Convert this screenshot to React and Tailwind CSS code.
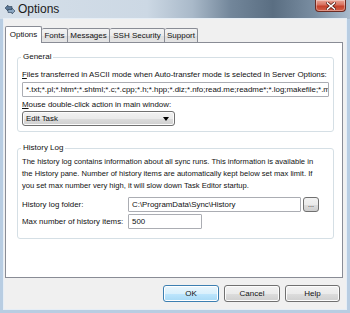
import React from "react";

function Btn({ children, w, def }) {
  return (
    <div
      className={
        "h-[17px] rounded-[3px] border flex items-center justify-center text-[8px] leading-none " +
        (def
          ? "border-[#3c7fb1] bg-[linear-gradient(180deg,#eaf6fd_0%,#d9f0fc_50%,#bee6fd_51%,#a7d9f5_100%)] shadow-[inset_0_0_0_1px_#ffffff]"
          : "border-[#707070] bg-[linear-gradient(180deg,#f2f2f2_0%,#ebebeb_50%,#dddddd_51%,#cfcfcf_100%)] shadow-[inset_0_0_0_1px_#fcfcfc]")
      }
      style={{ width: w }}
    >
      {children}
    </div>
  );
}

function Tab({ label, w, active }) {
  if (active) {
    return (
      <div
        className="h-[17px] -mb-[1px] relative z-10 bg-white border border-b-0 border-[#898c95] rounded-t-[2px] flex items-start justify-center pt-[4px] text-[8px] leading-none"
        style={{ width: w }}
      >
        {label}
      </div>
    );
  }
  return (
    <div
      className="h-[14px] border border-l-0 border-b-0 border-[#898c95] rounded-t-[2px] bg-[linear-gradient(180deg,#f3f3f3_0%,#ebebeb_50%,#dedede_51%,#e4e4e4_100%)] flex items-start justify-center pt-[3px] text-[8px] leading-none"
      style={{ width: w }}
    >
      {label}
    </div>
  );
}

function Group({ title, className, children }) {
  return (
    <div className={"relative border border-[#d5dfe5] rounded-[3px] " + className}>
      <span className="absolute -top-[6px] left-[3px] bg-white px-[2px] text-[8px] leading-[10px]">
        {title}
      </span>
      {children}
    </div>
  );
}

function Field({ children, className }) {
  return (
    <div
      className={
        "h-[15px] bg-white border border-[#abadb3] rounded-[1px] flex items-center pl-[3px] text-[7.9px] leading-none overflow-hidden whitespace-nowrap " +
        className
      }
    >
      {children}
    </div>
  );
}

export default function App() {
  return (
    <div className="w-[350px] h-[313px] flex flex-col bg-[#b8cde2] font-['Liberation_Sans',Arial,sans-serif] text-[#111] overflow-hidden">
      {/* title bar */}
      <div className="h-[19px] flex items-start bg-[linear-gradient(90deg,#d5dfe9_0%,#ccd8e4_42%,#a9b9c9_55%,#72869a_66%,#5a6e82_78%,#7a8ea2_90%,#a9bbcd_100%)]">
        <svg className="ml-[4px] mt-[4px]" width="12" height="11" viewBox="0 0 12 11">
          <path d="M1 4 L4 1 L4 2.5 L8 2.5 L8 5.5 L4 5.5 L4 7 Z" fill="#5b7897" stroke="#2c4056" strokeWidth="0.6" />
          <path d="M11 7 L8 10 L8 8.5 L4 8.5 L4 5.5 L8 5.5 L8 4 Z" fill="#8aa6c2" stroke="#2c4056" strokeWidth="0.6" />
        </svg>
        <span className="ml-[2px] mt-[3px] text-[12px] leading-[13px] text-[#1b1b1b]">Options</span>
        <div className="flex-1" />
        <div className="mr-[4px] w-[31px] h-[12px] rounded-b-[4px] border border-t-0 border-[#6b2a22] bg-[linear-gradient(180deg,#e9a597_0%,#d8705e_45%,#c4402b_55%,#d2614a_100%)] flex items-center justify-center shadow-[inset_0_0_0_1px_rgba(255,255,255,0.35)]">
          <svg width="10" height="8" viewBox="0 0 10 8">
            <path d="M1.5 1 L8.5 7 M8.5 1 L1.5 7" stroke="#5a1e17" strokeWidth="3" strokeLinecap="square" />
            <path d="M1.5 1 L8.5 7 M8.5 1 L1.5 7" stroke="#ffffff" strokeWidth="1.6" strokeLinecap="square" />
          </svg>
        </div>
      </div>

      {/* client */}
      <div className="flex-1 mx-[4px] mb-[4px] bg-[#f0f0f0] flex flex-col pt-[7px] pl-[1px] pr-[3px] shadow-[0_0_0_1px_#e6eef6]">
        {/* tabs */}
        <div className="h-[16px] flex items-end">
          <Tab label="Options" w={37} active />
          <Tab label="Fonts" w={26} />
          <Tab label="Messages" w={42} />
          <Tab label="SSH Security" w={55} />
          <Tab label="Support" w={33} />
        </div>
        {/* panel */}
        <div className="h-[236px] bg-white border border-[#898c95] flex flex-col">
          <Group title="General" className="mt-[14px] ml-[11px] mr-[8px] pt-[12px] pb-[5px] pl-[4px] pr-[4px]">
            <div className="h-[10px] leading-[10px] text-[7.9px] whitespace-nowrap">
              <span className="underline">F</span>iles transferred in ASCII mode when Auto-transfer mode is selected in Server Options:
            </div>
            <Field className="mt-[2px] h-[14px]">
              *.txt;*.pl;*.htm*;*.shtml;*.c;*.cpp;*.h;*.hpp;*.diz;*.nfo;read.me;readme*;*.log;makefile;*.m
            </Field>
            <div className="mt-[3px] h-[10px] leading-[10px] text-[7.9px]">
              <span className="underline">M</span>ouse double-click action in main window:
            </div>
            <div className="mt-[1px] w-[153px] h-[15px] rounded-[3px] border border-[#707070] bg-[linear-gradient(180deg,#f2f2f2_0%,#ebebeb_50%,#dddddd_51%,#cfcfcf_100%)] shadow-[inset_0_0_0_1px_#fcfcfc] flex items-center pl-[3px] pr-[5px] text-[7.9px] leading-none">
              <span className="flex-1">Edit Task</span>
              <svg width="6" height="4" viewBox="0 0 6 4">
                <path d="M0 0 L6 0 L3 4 Z" fill="#000" />
              </svg>
            </div>
          </Group>

          <Group title="History Log" className="mt-[16px] ml-[11px] mr-[8px] pt-[7px] pb-[9px] pl-[4px] pr-[4px]">
            <div className="text-[7.6px] leading-[12px] whitespace-nowrap">
              The history log contains information about all sync runs. This information is available in
              <br />
              the History pane. Number of history items are automatically kept below set max limit. If
              <br />
              you set max number very high, it will slow down Task Editor startup.
            </div>
            <div className="mt-[5px] flex items-center h-[15px]">
              <div className="w-[106px] text-[7.9px] leading-none">History log folder:</div>
              <Field className="w-[173px]">C:\ProgramData\Sync\History</Field>
              <div className="ml-[2px] w-[16px] h-[15px] rounded-[3px] border border-[#707070] bg-[linear-gradient(180deg,#f2f2f2_0%,#ebebeb_50%,#dddddd_51%,#cfcfcf_100%)] flex items-center justify-center text-[7px] leading-none">
                ...
              </div>
            </div>
            <div className="mt-[2px] flex items-center h-[15px]">
              <div className="w-[106px] text-[7.9px] leading-none">Max number of history items:</div>
              <Field className="w-[74px]">500</Field>
            </div>
          </Group>
        </div>

        {/* buttons */}
        <div className="mt-[7px] flex justify-end gap-[5px] pr-[3px]">
          <Btn w={56} def>OK</Btn>
          <Btn w={56}>Cancel</Btn>
          <Btn w={55}>Help</Btn>
        </div>
      </div>
    </div>
  );
}
